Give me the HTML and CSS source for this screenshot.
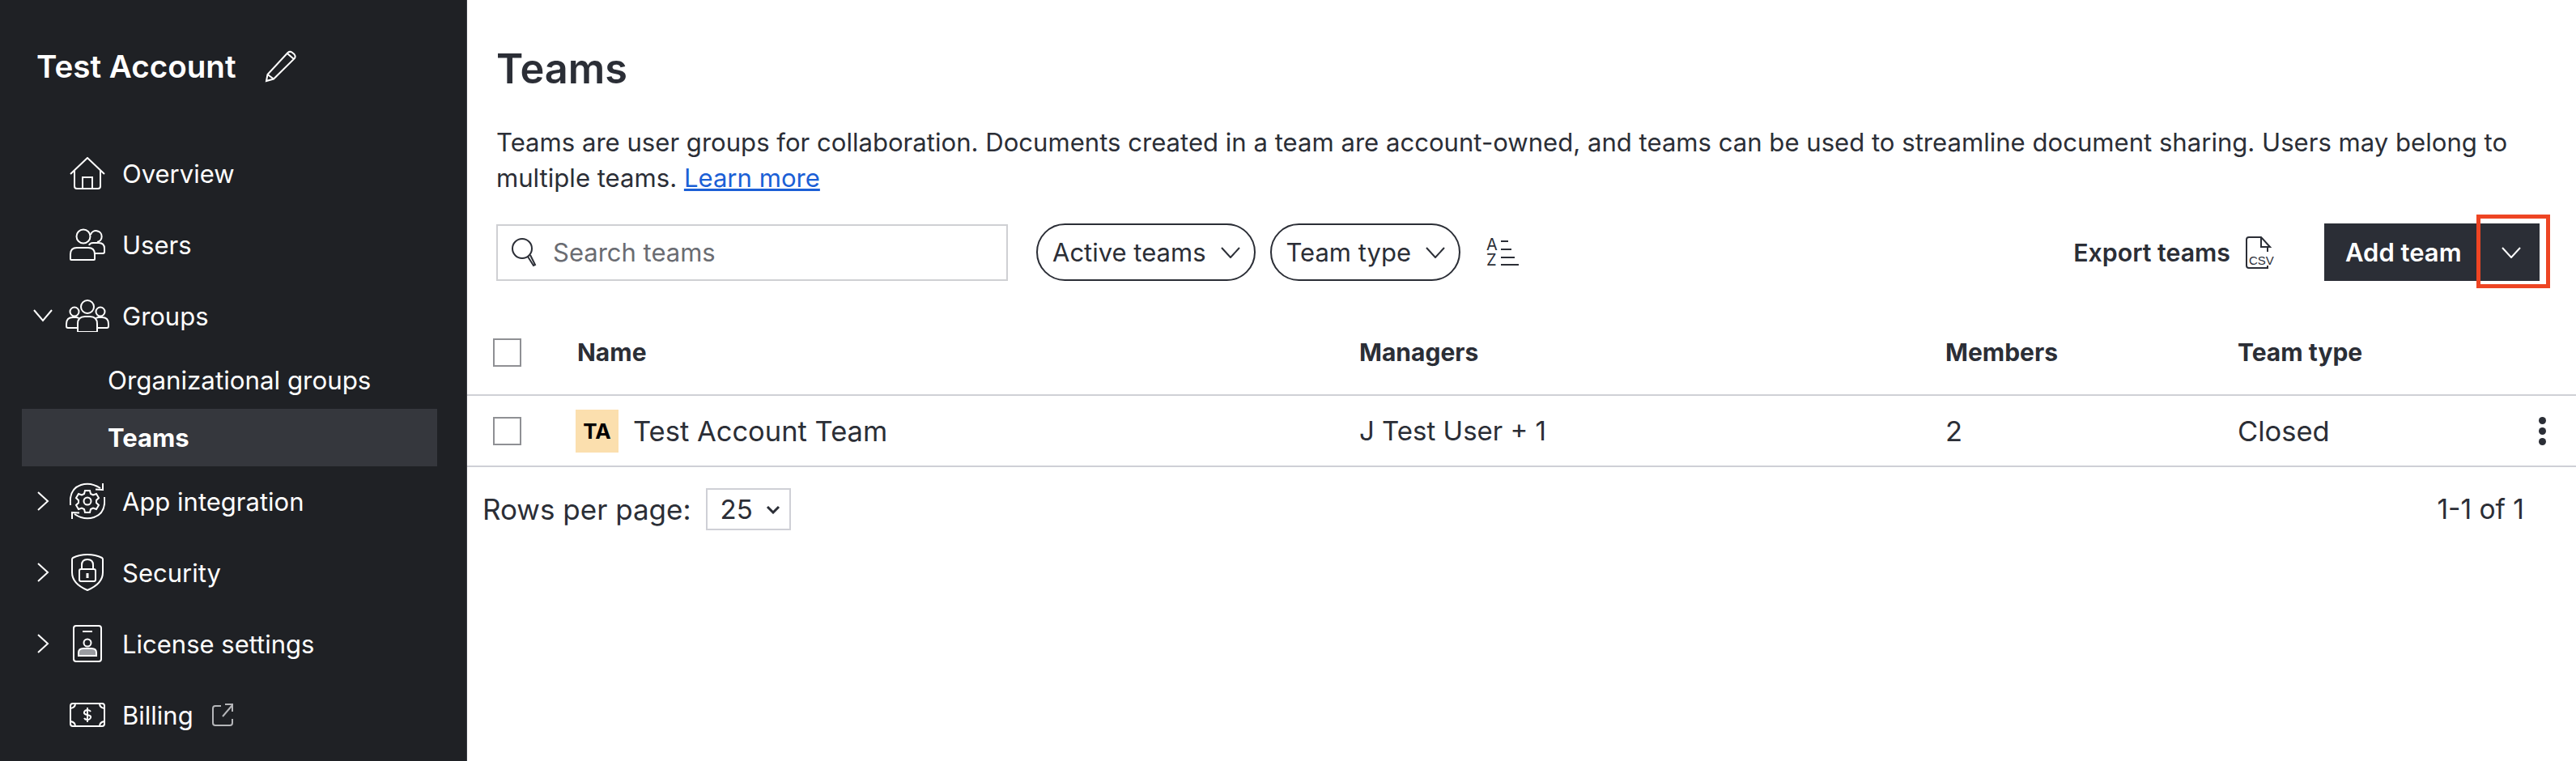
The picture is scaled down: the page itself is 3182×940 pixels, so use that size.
FILE: index.html
```html
<!DOCTYPE html>
<html lang="en">
<head>
    <meta charset="UTF-8">
    <meta name="viewport" content="width=device-width, initial-scale=1.0">
    <title>Teams</title>
    <link rel="stylesheet" href="styles.css">
</head>
<body>
    <div class="app">
        <aside class="sidebar">
            <div class="account">
                <span class="account-name">Test Account</span>
                <svg class="pencil" width="40" height="40" viewBox="0 0 40 40"><path d="M2 38l1.500-8L28.500 3q2.500-2 5-.5l3 2.500q2 2.500 .5 5L11 35.500zM3.500 30l7.500 5.500M28.500 4.500l7.500 6.500"/></svg>
            </div>
            <nav class="nav">
                <a class="nav-item"><span class="caret"></span><span class="nav-icon"><svg width="44" height="40" viewBox="0 0 44 40"><path d="M1 21L22 1l21 20M6 16v20q0 3 3 3h26q3 0 3-3V16M16 39V25h12v14"/></svg></span>Overview</a>
                <a class="nav-item"><span class="caret"></span><span class="nav-icon"><svg width="44" height="40" viewBox="0 0 44 40"><circle cx="17" cy="10" r="8.500"/><path d="M26 8a7 7 0 1 1 8 9M1 38v-6q0-8 8-8h14q8 0 8 8v6q0 1-1 1H2q-1 0-1-1zM24 21q1-3 5-3h7q7 0 7 7v4q0 2-2 2H31"/></svg></span>Users</a>
                <a class="nav-item"><span class="caret"><svg width="24" height="16" viewBox="0 0 24 16"><path d="M1 1l11 13L23 1"/></svg></span><span class="nav-icon"><svg width="54" height="40" viewBox="0 0 54 40"><circle cx="27" cy="9" r="8"/><circle cx="11" cy="15" r="5.500"/><circle cx="43" cy="15" r="5.500"/><path d="M15 39v-9q0-9 9-9h6q9 0 9 9v9q0 1-1 1H16q-1 0-1-1zM15 35H3q-2 0-2-2v-3q0-8 8-8h4q2 0 3 1M39 35h12q2 0 2-2v-3q0-8-8-8h-4q-2 0-3 1"/></svg></span>Groups</a>
                <a class="sub-item">Organizational groups</a>
                <a class="sub-item active">Teams</a>
                <a class="nav-item"><span class="caret"><svg width="16" height="24" viewBox="0 0 16 24"><path d="M2 1l12 11L2 23"/></svg></span><span class="nav-icon"><svg width="44" height="46" viewBox="0 0 44 46"><path d="M1 28Q-1 8 14 3q12-4 24 4M41 1v8l-9-.500M43 18q2 20-13 25-12 4-24-4M3 45v-8l9 .500"/><circle cx="22" cy="23" r="4.500"/><path d="M19 10h6l1 4 3 1.500 4-1.500 3 5-3 3v3l3 3-3 5-4-1.500-3 1.500-1 4h-6l-1-4-3-1.500-4 1.500-3-5 3-3v-3l-3-3 3-5 4 1.500 3-1.500z"/></svg></span>App integration</a>
                <a class="nav-item"><span class="caret"><svg width="16" height="24" viewBox="0 0 16 24"><path d="M2 1l12 11L2 23"/></svg></span><span class="nav-icon"><svg width="40" height="46" viewBox="0 0 40 46"><path d="M20 1Q30 1 38 5q1 1 1 2v16q0 14-19 22Q1 37 1 23V7q0-1 1-2 8-4 18-4z"/><rect x="10" y="19" width="20" height="15" rx="2"/><path d="M13 19v-5q0-7 7-7t7 7v5"/><path class="fill" d="M18.500 24h3v6h-3z"/></svg></span>Security</a>
                <a class="nav-item"><span class="caret"><svg width="16" height="24" viewBox="0 0 16 24"><path d="M2 1l12 11L2 23"/></svg></span><span class="nav-icon"><svg width="36" height="46" viewBox="0 0 36 46"><rect x="1" y="1" width="34" height="44" rx="3"/><path d="M12 8h12"/><circle cx="18" cy="22" r="4.500"/><path class="fill-dim" d="M7 38v-4q0-5 6-5h10q6 0 6 5v4z"/></svg></span>License settings</a>
                <a class="nav-item"><span class="caret"></span><span class="nav-icon"><svg width="44" height="30" viewBox="0 0 44 30"><rect x="1" y="1" width="42" height="28" rx="3"/><path d="M1 7q6-1 6-6M43 7q-6-1-6-6M1 23q6 1 6 6M43 23q-6 1-6 6M26 11q-1-2-4-2t-4 2.500 4 3.500 4 3.500-4 2.500-4-2M22 6v18"/></svg></span>Billing<svg class="external" width="26" height="28" viewBox="0 0 26 28"><path d="M11 3H4Q1 3 1 6v18q0 3 3 3h18q3 0 3-3v-5M13 16L25 2M16 1h9v9"/></svg></a>
            </nav>
        </aside>
        <main class="main">
            <h1 class="title">Teams</h1>
            <p class="intro">Teams are user groups for collaboration. Documents created in a team are account-owned, and teams can be used to streamline document sharing. Users may belong to multiple teams. <a class="link">Learn more</a></p>
            <div class="toolbar">
                <div class="search">
                    <svg width="32" height="40" viewBox="0 0 32 40"><circle cx="14" cy="15" r="12"/><path d="M21 25l7 11 2-1-6-12"/></svg>
                    <span>Search teams</span>
                </div>
                <button class="pill">Active teams<svg width="24" height="14" viewBox="0 0 24 14"><path d="M1 1l11 12L23 1"/></svg></button>
                <button class="pill">Team type<svg width="24" height="14" viewBox="0 0 24 14"><path d="M1 1l11 12L23 1"/></svg></button>
                <div class="sort"><span class="sort-az">A<br>Z</span><svg width="24" height="36" viewBox="0 0 24 36"><path d="M2 4h9M2 14h13M2 24h17M2 33h22"/></svg></div>
                <div class="toolbar-right">
                    <span class="export">Export teams<svg width="36" height="40" viewBox="0 0 36 40"><path d="M28 14V39H5q-3 0-3-3V4q0-3 3-3h15l11 12h-11V1"/><rect class="csv-back" x="6" y="19" width="30" height="17"/><text x="5" y="35" class="csv">CSV</text></svg></span>
                    <div class="split">
                        <button class="split-main">Add team</button>
                        <button class="split-arrow"><svg width="24" height="14" viewBox="0 0 24 14"><path d="M1 1l11 12L23 1"/></svg></button>
                        <span class="highlight"></span>
                    </div>
                </div>
            </div>
            <div class="table">
                <div class="row head">
                    <span class="col-check"><span class="checkbox"></span></span>
                    <span class="col-name">Name</span>
                    <span class="col-managers">Managers</span>
                    <span class="col-members">Members</span>
                    <span class="col-type">Team type</span>
                </div>
                <div class="row body-row">
                    <span class="col-check"><span class="checkbox"></span></span>
                    <span class="col-name"><span class="avatar">TA</span>Test Account Team</span>
                    <span class="col-managers manager-names">J Test User + 1</span>
                    <span class="col-members">2</span>
                    <span class="col-type">Closed</span>
                    <span class="kebab"><i></i><i></i><i></i></span>
                </div>
            </div>
            <div class="pager">
                <span>Rows per page:</span>
                <span class="rows-select">25<svg width="18" height="11" viewBox="0 0 18 11"><path d="M2 2l7 7 7-7"/></svg></span>
                <span class="pager-count">1-1 of 1</span>
            </div>
        </main>
    </div>
</body>
</html>
```

FILE: styles.css
```css
* {
    box-sizing: border-box;
}
body {
    margin: 0;
    font-family: Inter, "Noto Sans", sans-serif;
    font-size: 31px;
    color: #2b2e36;
    background-color: #fff;
    overflow: hidden;
}
svg {
    fill: none;
    stroke: currentColor;
    stroke-width: 2;
    flex-shrink: 0;
    display: block;
}
button {
    font-family: inherit;
    cursor: pointer;
}
.app {
    display: flex;
    height: 100vh;
}
.sidebar {
    width: 577px;
    flex-shrink: 0;
    background-color: #1f2125;
    border-right: 1px solid #3a3c44;
    color: #fff;
}
.account {
    height: 171px;
    padding: 62px 0 0 45px;
    display: flex;
    align-items: flex-start;
    gap: 35px;
}
.account-name {
    font-size: 38.6px;
    font-weight: 600;
    line-height: 40px;
}
.nav-item {
    display: flex;
    align-items: center;
    height: 88px;
    padding: 0 0 2px 41px;
}
.caret {
    width: 24px;
    display: flex;
    justify-content: center;
}
.nav-icon {
    width: 86px;
    display: flex;
    justify-content: center;
}
.fill {
    fill: #fff;
    stroke: none;
}
.fill-dim {
    fill: #9a9ca1;
    stroke: #fff;
}
.external {
    margin-left: 23px;
    color: #b5b6b9;
}
.sub-item {
    display: flex;
    align-items: center;
    height: 70px;
    margin: 0 36px 0 27px;
    padding-left: 106px;
    font-size: 31.3px;
}
.sub-item.active {
    height: 71px;
    background-color: #35373d;
    font-weight: 700;
    font-size: 31px;
}
.main {
    flex: 1;
    min-width: 0;
}
.title {
    margin: 0;
    padding: 53px 0 0 36px;
    font-size: 50.5px;
    font-weight: 600;
    line-height: 64px;
}
.intro {
    margin: 0;
    padding: 37px 50px 0 36px;
    font-size: 31.1px;
    line-height: 44px;
}
.link {
    color: #1b5fd6;
    text-decoration: underline;
}
.toolbar {
    display: flex;
    align-items: center;
    height: 71px;
    margin-top: 34px;
    padding: 0 45px 0 36px;
}
.search {
    display: flex;
    align-items: center;
    gap: 20px;
    width: 632px;
    height: 70px;
    padding-left: 16px;
    border: 2px solid #cfd0d3;
    color: #6a6c72;
}
.search svg {
    color: #2b2e36;
}
.pill {
    display: flex;
    align-items: center;
    gap: 18px;
    height: 71px;
    padding: 0 17px 0 18px;
    border: 2px solid #2b2e36;
    border-radius: 36px;
    background-color: #fff;
    color: #2b2e36;
    font-size: 31px;
    margin-left: 18px;
}
.pill:first-of-type {
    margin-left: 35px;
}
.sort {
    display: flex;
    align-items: center;
    gap: 2px;
    margin-left: 32px;
}
.sort-az {
    font-size: 20px;
    line-height: 19px;
}
.toolbar-right {
    display: flex;
    align-items: center;
    margin-left: auto;
}
.export {
    display: flex;
    align-items: center;
    gap: 18px;
    font-weight: 600;
    font-size: 30.3px;
}
.csv-back {
    fill: #fff;
    stroke: none;
}
.csv {
    font-size: 15px;
    font-family: "Liberation Sans Narrow", "Liberation Sans", sans-serif;
    fill: currentColor;
    stroke: none;
    font-weight: 400;
}
.split {
    display: flex;
    position: relative;
    margin-left: 62px;
    height: 71px;
}
.split-main {
    width: 188px;
    padding: 0 0 0 26px;
    border: none;
    background-color: #2b2e36;
    color: #fff;
    font-size: 31px;
    font-weight: 600;
    text-align: left;
}
.split-arrow {
    width: 78px;
    padding: 0 0 0 8px;
    border: none;
    background-color: #2b2e36;
    color: #fff;
    display: flex;
    align-items: center;
    justify-content: center;
}
.highlight {
    position: absolute;
    left: 188px;
    top: -11px;
    width: 91px;
    height: 91px;
    border: 5px solid #ee4523;
}
.table {
    margin-top: 42px;
}
.row {
    display: flex;
    align-items: center;
    position: relative;
    height: 88px;
    border-bottom: 2px solid #cfd0d6;
}
.row.head {
    height: 100px;
    padding-bottom: 6px;
    font-weight: 700;
    font-size: 30px;
}
.body-row {
    font-size: 34.5px;
}
.manager-names {
    font-size: 33px;
}
.col-check {
    width: 136px;
    padding-left: 32px;
}
.col-name {
    width: 966px;
    display: flex;
    align-items: center;
}
.col-managers {
    width: 724px;
}
.col-members {
    width: 361px;
}
.checkbox {
    display: block;
    width: 35px;
    height: 35px;
    border: 2px solid #8f9094;
}
.avatar {
    display: flex;
    align-items: center;
    justify-content: center;
    width: 53px;
    height: 53px;
    margin-right: 18px;
    margin-left: -2px;
    background-color: #fbdfae;
    color: #000;
    font-size: 26px;
    font-weight: 700;
}
.kebab {
    position: absolute;
    right: 37px;
    top: 26px;
    display: flex;
    flex-direction: column;
    gap: 4px;
}
.kebab i {
    display: block;
    width: 9px;
    height: 9px;
    border-radius: 50%;
    background-color: #2b2e36;
}
.pager {
    display: flex;
    align-items: center;
    height: 52px;
    margin-top: 26px;
    padding: 0 64px 0 19px;
    font-size: 35px;
}
.rows-select {
    display: flex;
    align-items: center;
    gap: 16px;
    height: 52px;
    width: 105px;
    margin-left: 18px;
    padding-left: 16px;
    border: 2px solid #cfd0d6;
    font-size: 33px;
}
.rows-select svg {
    stroke-width: 3;
}
.pager-count {
    margin-left: auto;
    font-size: 33.5px;
}
```
